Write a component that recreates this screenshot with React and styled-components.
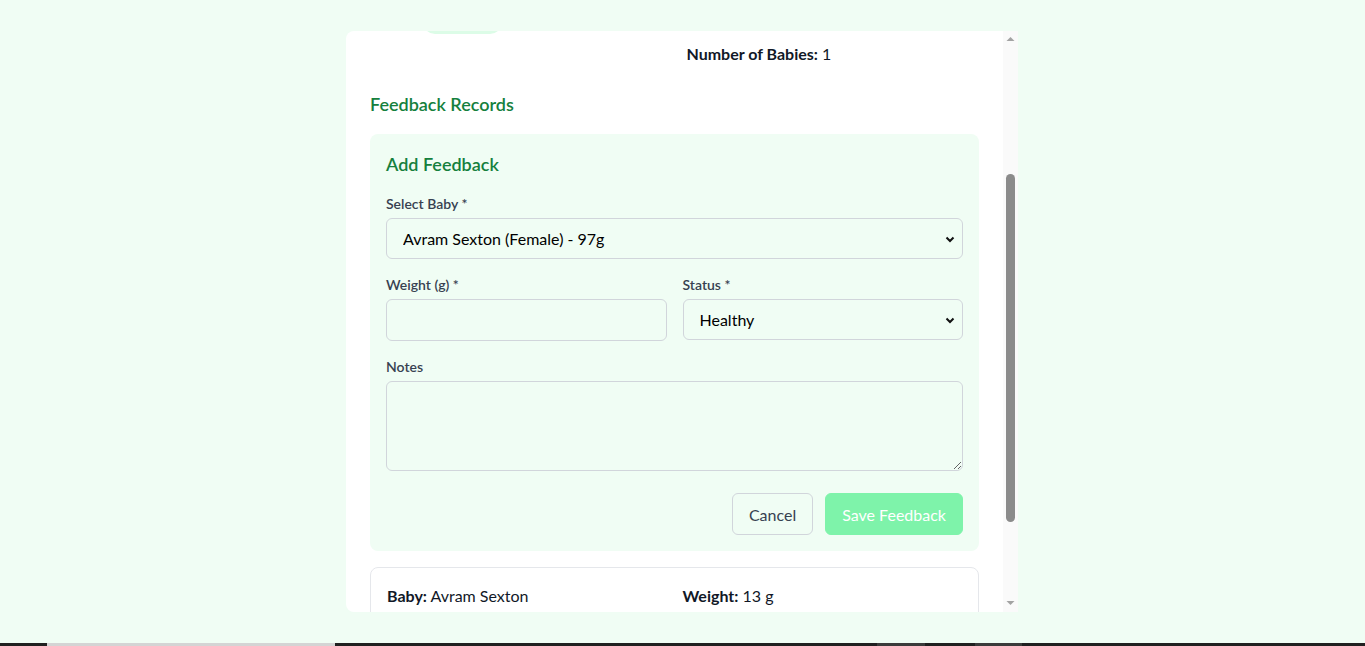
import React, { useLayoutEffect, useRef } from 'react'
import styled, { createGlobalStyle } from 'styled-components'

const svgUrl = (svg) => `url("data:image/svg+xml;utf8,${encodeURIComponent(svg)}")`

const chevron = svgUrl(
  "<svg xmlns='http://www.w3.org/2000/svg' width='12' height='12' viewBox='0 0 12 12'><path d='M2.5 4.5l3.5 3.5 3.5-3.5' fill='none' stroke='#111' stroke-width='2'/></svg>"
)

const GlobalStyle = createGlobalStyle`
  html, body {
    margin: 0;
    padding: 0;
    height: 646px;
    overflow: hidden;
  }
  body {
    font-family: Lato, "Liberation Sans", sans-serif;
    color: #111827;
  }
  * { box-sizing: border-box; }
`

export default function App() {
  const scrollerRef = useRef(null)
  const anchorRef = useRef(null)

  useLayoutEffect(() => {
    // keep the view where the reference sits: "Number of Babies" row just under the top edge
    if (scrollerRef.current && anchorRef.current) {
      scrollerRef.current.scrollTop = anchorRef.current.offsetTop - 11
    }
  }, [])

  return (
    <>
      <GlobalStyle />
      <Page>
        <Modal>
          <Scroller ref={scrollerRef}>
            <Header>
              <Title>Mother Details</Title>
              <Close>×</Close>
            </Header>
            <SectionTitle>Mother Information</SectionTitle>
            <InfoGrid>
              <Field>
                <b>Name:</b> Ila Mcdaniel
              </Field>
              <Field>
                <b>Age:</b> 29
              </Field>
              <Field>
                <b>Phone:</b> +1 (555) 201-4483
              </Field>
              <Field>
                <b>Address:</b> 42 Willow Lane
              </Field>
              <Field>
                <b>Status:</b> <Badge>Delivered</Badge>
              </Field>
              <Field>
                <b>Delivery:</b> Normal, Logged
              </Field>
              <Field />
              <Field ref={anchorRef}>
                <b>Number of Babies:</b> 1
              </Field>
            </InfoGrid>

            <Heading>Feedback Records</Heading>

            <FormBox>
              <FormTitle>Add Feedback</FormTitle>
              <Group>
                <Label>Select Baby *</Label>
                <Select defaultValue="a">
                  <option value="a">Avram Sexton (Female) - 97g</option>
                </Select>
              </Group>
              <Row>
                <Group>
                  <Label>Weight (g) *</Label>
                  <Input type="number" />
                </Group>
                <Group>
                  <Label>Status *</Label>
                  <Select defaultValue="healthy">
                    <option value="healthy">Healthy</option>
                    <option value="sick">Sick</option>
                  </Select>
                </Group>
              </Row>
              <Group>
                <Label>Notes</Label>
                <TextArea rows={3} />
              </Group>
              <Actions>
                <Button>Cancel</Button>
                <Button primary disabled>
                  Save Feedback
                </Button>
              </Actions>
            </FormBox>

            <RecordCard>
              <Field>
                <b>Baby:</b> Avram Sexton
              </Field>
              <Field>
                <b>Weight:</b> 13 g
              </Field>
              <Field>
                <b>Status:</b> Healthy
              </Field>
              <Field>
                <b>Date:</b> 5/14/2025
              </Field>
              <Wide>
                <b>Notes:</b> Feeding well
              </Wide>
              <Small>Recorded by staff</Small>
            </RecordCard>
          </Scroller>

          <Rail>
            <Arrow viewBox="0 0 15 15">
              <polygon points="3.5,10 7.5,6 11.5,10" />
            </Arrow>
            <Track>
              <Thumb />
            </Track>
            <Arrow viewBox="0 0 15 15">
              <polygon points="3.5,4 7.5,8 11.5,4" />
            </Arrow>
          </Rail>
        </Modal>
      </Page>
      <Taskbar>
        <Seg w={47} />
        <Seg w={288} light />
        <Seg flex />
        <Seg w={48} mid />
        <Seg w={50} />
        <Seg w={47} mid />
        <Seg w={343} />
      </Taskbar>
    </>
  )
}

const Page = styled.div`
  height: 643px;
  padding-right: 1px;
  background: #f0fdf4;
  display: flex;
  align-items: center;
  justify-content: center;
`

const Modal = styled.div`
  width: 672px;
  height: 581px;
  background: #fff;
  border-radius: 8px 0 0 8px;
  overflow: hidden;
  display: flex;
`

const Scroller = styled.div`
  position: relative;
  flex: 1 1 auto;
  min-width: 0;
  padding: 24px;
  overflow: hidden;
`

const Rail = styled.div`
  flex: 0 0 15px;
  background: #fafafa;
  display: flex;
  flex-direction: column;
`

const Arrow = styled.svg`
  width: 15px;
  height: 15px;
  flex: 0 0 15px;
  fill: #a3a3a3;
`

const Track = styled.div`
  flex: 1 1 auto;
  padding-top: 128px;
  display: flex;
  justify-content: center;
`

const Thumb = styled.div`
  width: 9px;
  height: 348px;
  border-radius: 5px;
  background: #8b8b8b;
`

const Header = styled.div`
  display: flex;
  justify-content: space-between;
  align-items: center;
  padding-bottom: 16px;
  border-bottom: 1px solid #e5e7eb;
  margin-bottom: 24px;
`

const Title = styled.h2`
  margin: 0;
  font-size: 20px;
  line-height: 28px;
  font-weight: 700;
  color: #15803d;
`

const Close = styled.button`
  border: none;
  background: none;
  font-size: 24px;
  line-height: 28px;
  color: #6b7280;
  padding: 0;
`

const SectionTitle = styled.h3`
  margin: 0 0 8px;
  font-size: 18px;
  line-height: 28px;
  font-weight: 600;
  color: #15803d;
`

const InfoGrid = styled.div`
  display: grid;
  grid-template-columns: 1fr 1fr;
  column-gap: 24px;
  row-gap: 8px;
`

const Field = styled.div`
  font-size: 16px;
  line-height: 24px;
  min-height: 24px;
  color: #111827;

  b {
    font-weight: 700;
  }
`

const Wide = styled(Field)`
  grid-column: 1 / -1;
`

const Small = styled.div`
  grid-column: 1 / -1;
  font-size: 14px;
  line-height: 24px;
  color: #6b7280;
`

const Badge = styled.span`
  display: inline-block;
  padding: 2px 10px;
  border-radius: 9999px;
  background: #dcfce7;
  color: #166534;
  font-size: 14px;
  line-height: 20px;
`

const Heading = styled.h3`
  margin: 24px 0 16px;
  font-size: 18px;
  line-height: 28px;
  font-weight: 600;
  color: #15803d;
`

const FormBox = styled.div`
  background: #f0fdf4;
  border-radius: 8px;
  padding: 16px;
  display: flex;
  flex-direction: column;
  gap: 16px;
`

const FormTitle = styled.h4`
  margin: 0;
  font-size: 18px;
  line-height: 28px;
  font-weight: 600;
  color: #15803d;
`

const Group = styled.div`
  display: flex;
  flex-direction: column;
  gap: 4px;
  min-width: 0;
`

const Row = styled.div`
  display: grid;
  grid-template-columns: 1fr 1fr;
  gap: 16px;
`

const Label = styled.label`
  font-size: 14px;
  line-height: 20px;
  font-weight: 600;
  color: #374151;
`

const control = `
  width: 100%;
  border: 1px solid #d1d5db;
  border-radius: 6px;
  background-color: transparent;
  font-family: Lato, "Liberation Sans", sans-serif;
  font-size: 16px;
  line-height: 24px;
  color: #000;
  outline: none;
`

const Select = styled.select`
  ${control}
  height: 41px;
  padding: 0 32px 0 16px;
  appearance: none;
  background-image: ${chevron};
  background-repeat: no-repeat;
  background-position: right 6px center;
`

const Input = styled.input`
  ${control}
  height: 42px;
  padding: 8px 12px;
  appearance: textfield;
  &::-webkit-inner-spin-button {
    display: none;
  }
`

const TextArea = styled.textarea`
  ${control}
  display: block;
  height: 90px;
  padding: 8px 12px;
  resize: vertical;
`

const Actions = styled.div`
  display: flex;
  justify-content: flex-end;
  gap: 12px;
  margin-top: 6px;
`

const Button = styled.button`
  height: 42px;
  padding: 0 16px;
  border-radius: 6px;
  font-family: Lato, "Liberation Sans", sans-serif;
  font-size: 16px;
  border: 1px solid ${(p) => (p.primary ? '#7ef3aa' : '#d1d5db')};
  background: ${(p) => (p.primary ? '#7ef3aa' : 'transparent')};
  color: ${(p) => (p.primary ? '#fff' : '#374151')};
  min-width: ${(p) => (p.primary ? '136px' : '81px')};
`

const RecordCard = styled.div`
  margin-top: 16px;
  border: 1px solid #e5e7eb;
  border-radius: 8px;
  padding: 16px;
  display: grid;
  grid-template-columns: 1fr 1fr;
  column-gap: 16px;
  row-gap: 8px;
`

const Taskbar = styled.div`
  height: 3px;
  display: flex;
  background: #202020;
`

const Seg = styled.div`
  flex: ${(p) => (p.flex ? '1 1 auto' : `0 0 ${p.w}px`)};
  background: ${(p) => (p.light ? '#d4d4d4' : p.mid ? '#3b3b3b' : '#202020')};
`
